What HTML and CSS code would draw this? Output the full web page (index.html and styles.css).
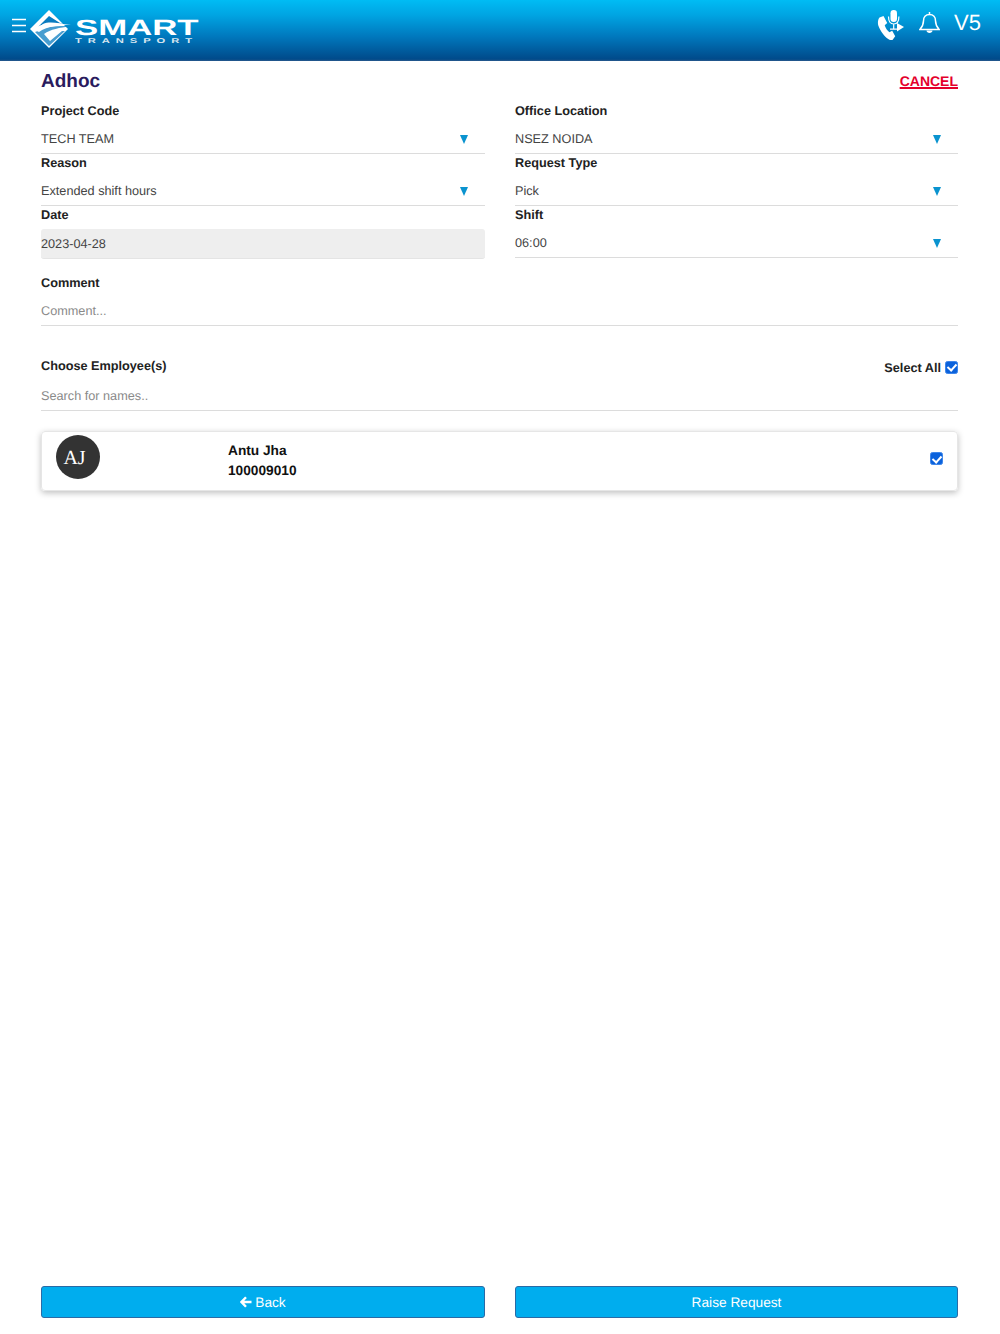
FILE: index.html
```html
<!DOCTYPE html>
<html lang="en">
<head>
<meta charset="utf-8">
<title>Adhoc</title>
<link rel="stylesheet" href="styles.css">
</head>
<body>
<header class="topbar">
  <div class="brand">
    <svg class="menu" viewBox="0 0 14 15" aria-hidden="true"><path d="M0 1.500h14M0 7.500h14M0 13.500h14"/></svg>
    <svg class="mark" viewBox="0 0 42 38" aria-hidden="true">
      <path class="mark-w" d="M20 0 39 19 20 38 1 19Z"/>
      <path class="mark-b" d="M20 6 11 15 7 19 14 14C20 11 30 13 39 15L31 13 Z"/>
      <path class="mark-b" d="M9 21C17 16 28 16 42 16 30 18 22 19 15 24L21 31 33 21 36 21 20 36 6 22Z" opacity=".75"/>
      <path class="mark-w2" d="M4 19C14 12 28 13 42 15 29 15 18 16 10 22Z"/>
    </svg>
    <div class="wordmark">
      <span class="smart">SMART</span>
      <span class="transport">TRANSPORT</span>
    </div>
  </div>
  <div class="tools">
    <svg class="voice" viewBox="0 0 28 30" aria-hidden="true">
      <path class="fill" d="M2.500 7.500 6.500 6l3.700 7-2.500 2.200c.9 3 2.500 5.300 4.700 7l2.800-1.500 3 5.500-2.500 3.500c-1.500.7-3 .3-4.500-.8C7.500 26.500 3.500 21.500 1.300 15.500.5 12.500 1 9.500 2.500 7.500Z"/>
      <rect class="fill" x="13.500" y="0" width="6.500" height="12" rx="3.200"/>
      <path class="line" d="M11.500 6.500c0 5 2 7.500 5.200 7.500s5.200-2.500 5.200-7.500M16.700 14v5M13 19.200h7"/>
      <path class="fill" d="M20 13 27 17l-7 4.500Z"/>
    </svg>
    <svg class="bell" viewBox="0 0 21 24" aria-hidden="true">
      <path d="M10.500 1v2.500M10.500 3.500c-3.900 0-6 2.800-6 6.300 0 4-1.200 6-3.600 8.700h19.200c-2.400-2.700-3.600-4.700-3.600-8.700 0-3.500-2.100-6.300-6-6.300Z"/>
      <path class="clap" d="M7.500 19.500c0 3.300 6 3.300 6 0Z"/>
    </svg>
    <span class="version">V5</span>
  </div>
</header>

<main class="page">
  <div class="title-row">
    <h1>Adhoc</h1>
    <a class="cancel" href="#">CANCEL</a>
  </div>

  <div class="form-grid">
    <div class="field">
      <label>Project Code</label>
      <div class="select"><span>TECH TEAM</span><i class="caret"></i></div>
    </div>
    <div class="field">
      <label>Office Location</label>
      <div class="select"><span>NSEZ NOIDA</span><i class="caret"></i></div>
    </div>
    <div class="field">
      <label>Reason</label>
      <div class="select"><span>Extended shift hours</span><i class="caret"></i></div>
    </div>
    <div class="field">
      <label>Request Type</label>
      <div class="select"><span>Pick</span><i class="caret"></i></div>
    </div>
    <div class="field">
      <label>Date</label>
      <div class="select disabled"><span>2023-04-28</span></div>
    </div>
    <div class="field">
      <label>Shift</label>
      <div class="select"><span>06:00</span><i class="caret"></i></div>
    </div>
  </div>

  <div class="field comment">
    <label>Comment</label>
    <input class="text" type="text" placeholder="Comment...">
  </div>

  <div class="choose-row">
    <label>Choose Employee(s)</label>
    <label class="select-all">Select All <input type="checkbox" checked></label>
  </div>
  <input class="text search" type="text" placeholder="Search for names..">

  <div class="employee">
    <div class="avatar">AJ</div>
    <div class="emp-info">
      <div>Antu Jha</div>
      <div>100009010</div>
    </div>
    <input class="emp-check" type="checkbox" checked>
  </div>

  <footer class="actions">
    <button type="button" class="btn">
      <svg class="arrow" viewBox="0 0 12 12" aria-hidden="true"><path d="M6 1.200 1.500 6 6 10.800M2 6h9.500"/></svg>
      Back
    </button>
    <button type="button" class="btn">Raise Request</button>
  </footer>
</main>
</body>
</html>
```
FILE: styles.css
```css
* { box-sizing: border-box; text-rendering: geometricPrecision; }
html, body { margin: 0; padding: 0; }
body {
  background: #fff;
  font-family: "Liberation Sans", Arial, sans-serif;
  color: #333;
  min-height: 1334px;
  display: flex;
  flex-direction: column;
}
.topbar {
  height: 61px;
  flex: none;
  display: flex;
  justify-content: space-between;
  background: linear-gradient(180deg, #00bcf4 0%, #00a4e2 25%, #0078bd 60%, #004a8a 97%, #2b5a8c 100%);
  color: #fff;
}
.brand { display: flex; align-items: flex-start; padding-left: 12px; }
.menu { width: 14px; height: 15px; margin-top: 18px; fill: none; stroke: #fff; stroke-width: 1.300; }
.mark { width: 42px; height: 38px; margin: 10px 0 0 3px; }
.mark-w, .mark-w2 { fill: #fff; }
.mark-b { fill: #0a7cc0; }
.wordmark { margin: 18px 0 0 4px; display: flex; flex-direction: column; width: 125px; }
.smart {
  font-size: 22px;
  line-height: 20px;
  font-weight: 700;
  transform: scaleX(1.58);
  transform-origin: left center;
  white-space: nowrap;
}
.transport {
  font-size: 7px;
  line-height: 7px;
  font-weight: 700;
  letter-spacing: 3.700px;
  transform: scaleX(1.6);
  transform-origin: left center;
  color: #d8e6f0;
  white-space: nowrap;
}
.tools { display: flex; align-items: flex-start; padding-right: 19px; }
.voice { width: 28px; height: 30px; margin-top: 10px; }
.voice .fill { fill: #fff; }
.voice .line { fill: none; stroke: #fff; stroke-width: 1.200; }
.bell { width: 21px; height: 24px; margin: 11px 0 0 14px; fill: none; stroke: #fff; stroke-width: 1.500; }
.bell .clap { fill: #fff; stroke: none; }
.version { font-size: 22px; line-height: 24px; margin: 11px 0 0 14px; }

.page {
  flex: 1;
  display: flex;
  flex-direction: column;
  padding: 0 42px 16px 41px;
}
.title-row {
  display: flex;
  justify-content: space-between;
  align-items: center;
  height: 42px;
}
h1 { margin: 0; font-size: 19px; line-height: 40px; font-weight: 700; color: #2a1b5e; }
.cancel { margin-top: -2px; font-size: 14px; font-weight: 700; color: #e4002b; text-decoration: underline; text-decoration-thickness: 2px; text-underline-offset: 1px; }

.form-grid {
  display: grid;
  grid-template-columns: 444px 443px;
  column-gap: 30px;
}
.field { height: 52px; }
label {
  display: block;
  font-size: 12.700px;
  line-height: 16px;
  font-weight: 700;
  color: #222;
}
.field > label { margin-bottom: 4px; }
.select {
  display: flex;
  align-items: center;
  justify-content: space-between;
  height: 31px;
  font-size: 12.700px;
  color: #444;
  border-bottom: 1px solid #dcdcdc;
  padding: 2px 17px 0 0;
}
.select.disabled {
  height: 30px;
  margin-top: 6px;
  padding-top: 0;
  background: #eee;
  border-radius: 3px;
  border-bottom: 1px solid #e4e4e4;
}
.caret {
  width: 0;
  height: 0;
  border-left: 4.500px solid transparent;
  border-right: 4.500px solid transparent;
  border-top: 9px solid #0a93cf;
}
.text {
  display: block;
  width: 100%;
  height: 29px;
  border: 0;
  border-bottom: 1px solid #dcdcdc;
  padding: 0;
  font: 12.700px "Liberation Sans", Arial, sans-serif;
  outline: none;
  background: none;
}
.text::placeholder { color: #8a8a8a; opacity: 1; }
.comment { height: auto; margin-top: 16px; }
.comment > label { margin-bottom: 6px; }
.choose-row {
  display: flex;
  justify-content: space-between;
  align-items: center;
  margin-top: 32px;
  height: 16px;
}
.select-all { display: flex; align-items: center; gap: 4px; margin-top: 4px; }
.search { margin-top: 8px; }
input[type="checkbox"] {
  appearance: none;
  position: relative;
  flex: none;
  width: 13px;
  height: 13px;
  margin: -2px 0 0;
  background: #0b62dc;
  border: 1px solid #3d86ea;
  border-radius: 2.500px;
}
input[type="checkbox"]::after {
  content: "";
  position: absolute;
  left: 3px;
  top: 0.500px;
  width: 4px;
  height: 7px;
  border: solid #fff;
  border-width: 0 2px 2px 0;
  transform: rotate(42deg);
}
.employee {
  display: flex;
  align-items: center;
  height: 60px;
  margin-top: 19.500px;
  padding: 0 14px 0 14px;
  border: 1px solid #e6e6e6;
  border-radius: 4px;
  box-shadow: 0 2px 6px rgba(0, 0, 0, .25);
}
.avatar {
  width: 44px;
  height: 44px;
  border-radius: 50%;
  background: #333;
  color: #fff;
  font: 20px/46px "Liberation Serif", "Times New Roman", serif;
  text-align: center;
  padding-right: 7px;
  margin-top: -7px;
  flex: none;
}
.emp-info {
  flex: 1;
  margin-left: 128px;
  font-size: 13.700px;
  line-height: 20px;
  font-weight: 700;
  color: #111;
}
input.emp-check { margin-top: -4px; }
.actions {
  margin-top: auto;
  display: grid;
  grid-template-columns: 444px 443px;
  column-gap: 30px;
}
.btn {
  height: 32px;
  background: #00adee;
  border: 1px solid #2a6aa5;
  border-radius: 3px;
  color: #fff;
  font: 13.700px "Liberation Sans", Arial, sans-serif;
  display: flex;
  align-items: center;
  justify-content: center;
  gap: 3px;
}
.arrow { width: 12px; height: 12px; fill: none; stroke: #fff; stroke-width: 2.400; }
```
